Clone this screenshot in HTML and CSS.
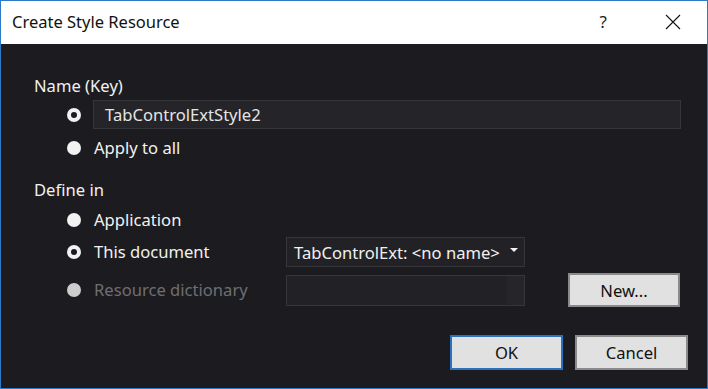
FILE: index.html
```html
<!DOCTYPE html>
<html>
<head>
<meta charset="utf-8">
<link rel="stylesheet" href="styles.css">
</head>
<body>
<div class="dialog">
  <div class="titlebar">
    <span class="title">Create Style Resource</span>
    <span class="help">?</span>
    <svg class="close" width="16" height="16" viewBox="0 0 16 16"><path d="M1 1 L15 15 M15 1 L1 15" stroke="#111" stroke-width="1.1" fill="none"/></svg>
  </div>
  <div class="content">
    <div class="group-label first">Name (Key)</div>
    <div class="row r-name">
      <span class="radio checked"></span>
      <div class="textbox wide">TabControlExtStyle2</div>
    </div>
    <div class="row r-all">
      <span class="radio"></span>
      <span class="opt">Apply to all</span>
    </div>
    <div class="group-label second">Define in</div>
    <div class="row r-app">
      <span class="radio"></span>
      <span class="opt">Application</span>
    </div>
    <div class="row r-doc">
      <span class="radio checked"></span>
      <span class="opt fixed">This document</span>
      <div class="combo"><span>TabControlExt: &lt;no name&gt;</span><span class="arrow"></span></div>
    </div>
    <div class="row r-res">
      <span class="radio disabled"></span>
      <span class="opt fixed dim">Resource dictionary</span>
      <div class="combo empty"><span class="scroll"></span></div>
      <button class="btn new">New...</button>
    </div>
    <div class="actions">
      <button class="btn ok">OK</button>
      <button class="btn cancel">Cancel</button>
    </div>
  </div>
</div>
</body>
</html>
```
FILE: styles.css
```css
html, body {
  margin: 0;
  padding: 0;
  background: #1c1c20;
}
.dialog {
  width: 706px;
  height: 387px;
  border: 1px solid #2b79c7;
  display: flex;
  flex-direction: column;
  font-family: "Noto Sans", "Open Sans", sans-serif;
  background: #1c1c20;
}
.titlebar {
  height: 43px;
  background: #ffffff;
  display: flex;
  align-items: center;
}
.title {
  margin-left: 11px;
  font-size: 16.5px;
  color: #111;
  margin-top: -2px;
}
.help {
  margin-left: auto;
  font-size: 17px;
  color: #222;
  margin-right: 58px;
  margin-top: -2px;
}
.close {
  margin-right: 26px;
  margin-top: -2px;
}
.content {
  flex: 1;
  display: flex;
  flex-direction: column;
  color: #f1f1f1;
  font-size: 16.6px;
}
.group-label {
  height: 22px;
  line-height: 22px;
  margin-left: 33px;
}
.group-label.first { margin-top: 31px; }
.group-label.second { margin-top: 17px; }
.row {
  display: flex;
  align-items: center;
  padding-left: 66px;
}
.r-name { height: 29px; margin-top: 3px; }
.r-all { height: 28px; margin-top: 5px; }
.r-app { height: 28px; margin-top: 5px; }
.r-doc { height: 30px; margin-top: 3px; }
.r-res { height: 34px; margin-top: 6px; }
.radio {
  width: 14px;
  height: 14px;
  border-radius: 50%;
  background: #f2f2f2;
  flex: none;
  margin-right: 13px;
  display: flex;
  align-items: center;
  justify-content: center;
}
.radio.checked::after {
  content: "";
  width: 6px;
  height: 6px;
  border-radius: 50%;
  background: #1c1c20;
}
.radio.disabled { background: #cdcdcd; }
.opt { line-height: 22px; }
.opt.fixed { width: 192px; }
.dim { color: #6e6e72; }
.textbox {
  box-sizing: border-box;
  height: 29px;
  background: #252529;
  border: 1px solid #35353a;
  color: #e4e4e4;
  padding-left: 11px;
  line-height: 27px;
}
.textbox.wide {
  width: 588px;
  margin-left: -1px;
}
.combo {
  box-sizing: border-box;
  width: 239px;
  height: 30px;
  background: #222226;
  border: 1px solid #35353a;
  display: flex;
  align-items: center;
  padding-left: 7px;
  color: #f1f1f1;
  white-space: nowrap;
}
.r-res .combo {
  height: 31px;
  padding: 0;
  justify-content: flex-end;
}
.scroll {
  width: 17px;
  height: 29px;
  background: #26262a;
}
.arrow {
  margin-left: auto;
  margin-right: 6px;
  width: 0;
  height: 0;
  border-left: 4px solid transparent;
  border-right: 4px solid transparent;
  border-top: 4px solid #f1f1f1;
  margin-top: -4px;
  flex: none;
}
.btn {
  box-sizing: border-box;
  font-family: "Noto Sans", "Open Sans", sans-serif;
  font-size: 16.6px;
  color: #111;
  background: #e1e1e1;
  border: 2px solid #8a8a8a;
  padding: 0;
}
.new {
  width: 112px;
  height: 34px;
  margin-left: 43px;
}
.actions {
  display: flex;
  justify-content: flex-end;
  gap: 12px;
  margin-top: 28px;
  padding-right: 19px;
}
.ok, .cancel {
  width: 113px;
  height: 35px;
}
.ok { border-color: #2a72bb; }
```
